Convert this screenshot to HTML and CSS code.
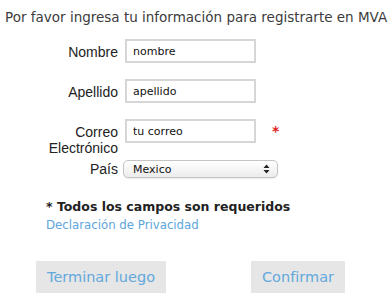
FILE: index.html
```html
<!DOCTYPE html>
<html lang="es">
<head>
<meta charset="utf-8">
<link rel="stylesheet" href="styles.css">
</head>
<body>
<div class="page">
  <p class="title">Por favor ingresa tu información para registrarte en MVA</p>
  <form class="form">
    <div class="row">
      <label class="label">Nombre</label>
      <input class="field" type="text" value="nombre">
    </div>
    <div class="row">
      <label class="label">Apellido</label>
      <input class="field" type="text" value="apellido">
    </div>
    <div class="row row-tight">
      <label class="label">Correo Electrónico</label>
      <input class="field" type="text" value="tu correo">
      <span class="req">*</span>
    </div>
    <div class="row row-select">
      <label class="label label-select">País</label>
      <div class="select">
        <span class="select-text">Mexico</span>
        <svg class="select-arrows" width="7" height="10" viewBox="0 0 7 10"><path d="M3.5 0.5 L6.5 4 L0.5 4 Z M0.5 6 L6.5 6 L3.5 9.5 Z" fill="#222"/></svg>
      </div>
    </div>
  </form>
  <div class="notes">
    <p class="required">* Todos los campos son requeridos</p>
    <a class="privacy" href="#">Declaración de Privacidad</a>
  </div>
  <div class="actions">
    <button class="btn" type="button">Terminar luego</button>
    <button class="btn" type="button">Confirmar</button>
  </div>
</div>
</body>
</html>
```
FILE: styles.css
```css
* { box-sizing: border-box; }
html, body { margin: 0; padding: 0; background: #fff; }
body { width: 392px; height: 306px; overflow: hidden; }
.page { font-family: "DejaVu Sans", Verdana, sans-serif; }
.title {
  margin: 0;
  padding: 8px 0 0 5px;
  font-size: 13.5px;
  line-height: 18px;
  color: #3c3c3c;
  white-space: nowrap;
}
.form { margin-top: 13px; }
.row {
  display: grid;
  grid-template-columns: 118px 131px 1fr;
  column-gap: 7px;
  align-items: start;
  margin-bottom: 16px;
}
.row-tight { margin-bottom: 4px; }
.label {
  font-family: "Liberation Sans", Arial, sans-serif;
  font-size: 14px;
  line-height: 16px;
  padding: 5px 0 0 40px;
  text-align: right;
  color: #222;
}
.label-select { padding-top: 1px; }
.field {
  width: 131px;
  height: 24px;
  margin: 0;
  border: 2px solid #d6d6d6;
  padding: 0 0 0 6px;
  font-family: "DejaVu Sans", sans-serif;
  font-size: 11px;
  color: #111;
  background: #fff;
  outline: none;
}
.req {
  color: #e02020;
  font-family: "DejaVu Sans", sans-serif;
  font-weight: bold;
  font-size: 14px;
  line-height: 14px;
  margin: 5px 0 0 9px;
}
.row-select { grid-template-columns: 118px 155px 1fr; column-gap: 5px; }
.select {
  height: 18px;
  border: 1px solid #c4c4c4;
  border-radius: 5px;
  background: linear-gradient(#ffffff, #ececec);
  display: flex;
  align-items: center;
  justify-content: space-between;
  padding: 0 7px 0 9px;
  box-shadow: 0 1px 1px rgba(0,0,0,0.08);
}
.select-text {
  font-family: "DejaVu Sans", sans-serif;
  font-size: 11px;
  color: #111;
}
.select-arrows { display: block; }
.notes { padding-left: 46px; margin-top: 21px; }
.required {
  margin: 0;
  font-size: 12.5px;
  font-weight: bold;
  line-height: 16px;
  color: #222;
}
.privacy {
  display: block;
  margin-top: 2px;
  font-size: 11.75px;
  line-height: 17px;
  color: #5da5dc;
  text-decoration: none;
}
.actions {
  display: flex;
  justify-content: space-between;
  padding: 0 47px 0 36px;
  margin-top: 27px;
}
.btn {
  height: 32px;
  border: 0;
  margin: 0;
  padding: 0 11px;
  background: #e6e6e6;
  color: #62a8dd;
  font-family: "DejaVu Sans", Verdana, sans-serif;
  font-size: 14.5px;
}
```
